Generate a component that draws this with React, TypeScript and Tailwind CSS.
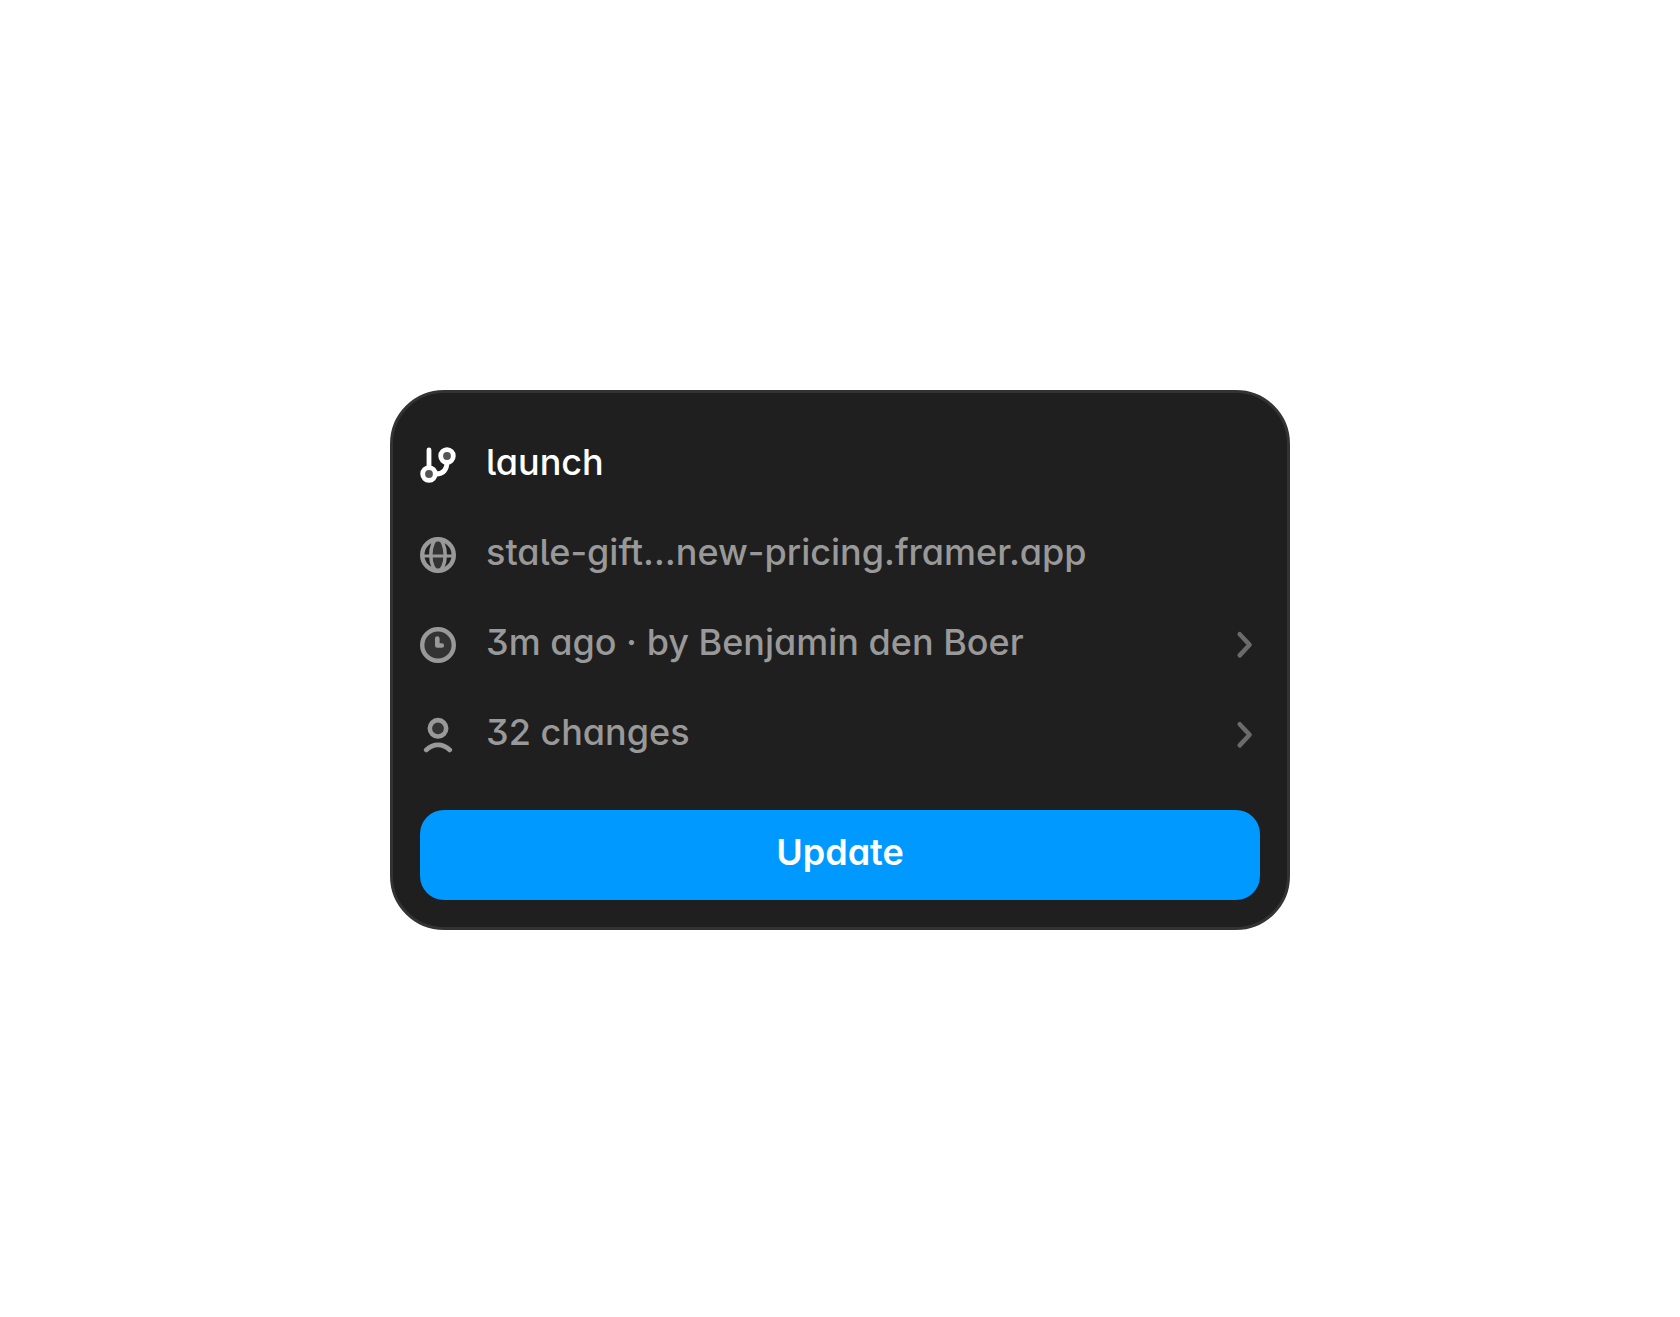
import type { ReactNode } from "react";

function BranchIcon() {
  return (
    <svg className="size-9 shrink-0" viewBox="0 0 36 36" fill="none" stroke="#fff" strokeLinecap="round" aria-hidden="true">
      <path d="M9 3v18" strokeWidth="4.8" />
      <path d="M27 15c0 7.5-3.5 12-11 12" strokeWidth="4.8" />
      <circle cx="9" cy="27" r="6.3" fill="#555" strokeWidth="4.8" />
      <circle cx="27" cy="9" r="6.3" fill="#555" strokeWidth="4.8" />
    </svg>
  );
}

function GlobeIcon() {
  return (
    <svg className="size-9 shrink-0" viewBox="0 0 36 36" fill="none" stroke="#999" aria-hidden="true">
      <ellipse cx="18" cy="18" rx="7.2" ry="16" fill="#333" strokeWidth="3.5" />
      <path d="M2 19h32" strokeWidth="3" />
      <circle cx="18" cy="18" r="15.8" strokeWidth="4.4" />
    </svg>
  );
}

function ClockIcon() {
  return (
    <svg className="size-9 shrink-0" viewBox="0 0 36 36" fill="none" stroke="#999" strokeLinecap="round" strokeLinejoin="round" aria-hidden="true">
      <circle cx="18" cy="18" r="15.8" fill="#333" strokeWidth="4.4" />
      <path d="M17.3 11.5v7h4.5" strokeWidth="4.6" />
    </svg>
  );
}

function PersonIcon() {
  return (
    <svg className="size-9 shrink-0" viewBox="0 0 36 36" fill="none" stroke="#999" strokeLinecap="round" aria-hidden="true">
      <circle cx="18" cy="11.3" r="8.2" fill="#333" strokeWidth="4.6" />
      <path d="M6.2 33c7-6.9 16.6-6.9 23.6 0" strokeWidth="4.6" />
    </svg>
  );
}

function Chevron() {
  return (
    <svg className="h-9 w-6 shrink-0" viewBox="0 0 24 36" fill="none" stroke="#6b6b6b" strokeWidth="4.5" strokeLinecap="round" strokeLinejoin="round" aria-hidden="true">
      <path d="M3.7 7.2L13.6 17.8L3.7 28.4" />
    </svg>
  );
}

function Label({ children }: { children: ReactNode }) {
  return <span className="min-w-0 flex-1 truncate pb-1.5 text-left">{children}</span>;
}

export default function App() {
  return (
    <main className="flex min-h-screen items-center justify-center bg-white pt-[3px] font-['Inter',sans-serif] text-[36px] leading-[44px] font-medium [font-feature-settings:'cv01','cv05','cv09','cv11','ss03']">
      <section className="w-full max-w-[900px] rounded-[54px] border-[3px] border-[#333] bg-[#1f1f1f] p-[27px] text-[#999]">
        <div className="flex h-[90px] items-center gap-[30px] text-white">
          <BranchIcon />
          <Label>launch</Label>
        </div>
        <a href="#site" className="flex h-[90px] items-center gap-[30px]">
          <GlobeIcon />
          <Label>stale-gift…new-pricing.framer.app</Label>
        </a>
        <button type="button" className="flex h-[90px] w-full items-center gap-[30px]">
          <ClockIcon />
          <Label>3m ago · by Benjamin den Boer</Label>
          <Chevron />
        </button>
        <button type="button" className="flex h-[90px] w-full items-center gap-[30px]">
          <PersonIcon />
          <Label>32 changes</Label>
          <Chevron />
        </button>
        <button type="button" className="mt-[30px] h-[90px] w-full rounded-3xl bg-[#0099ff] pb-1.5 font-semibold text-white">
          Update
        </button>
      </section>
    </main>
  );
}
